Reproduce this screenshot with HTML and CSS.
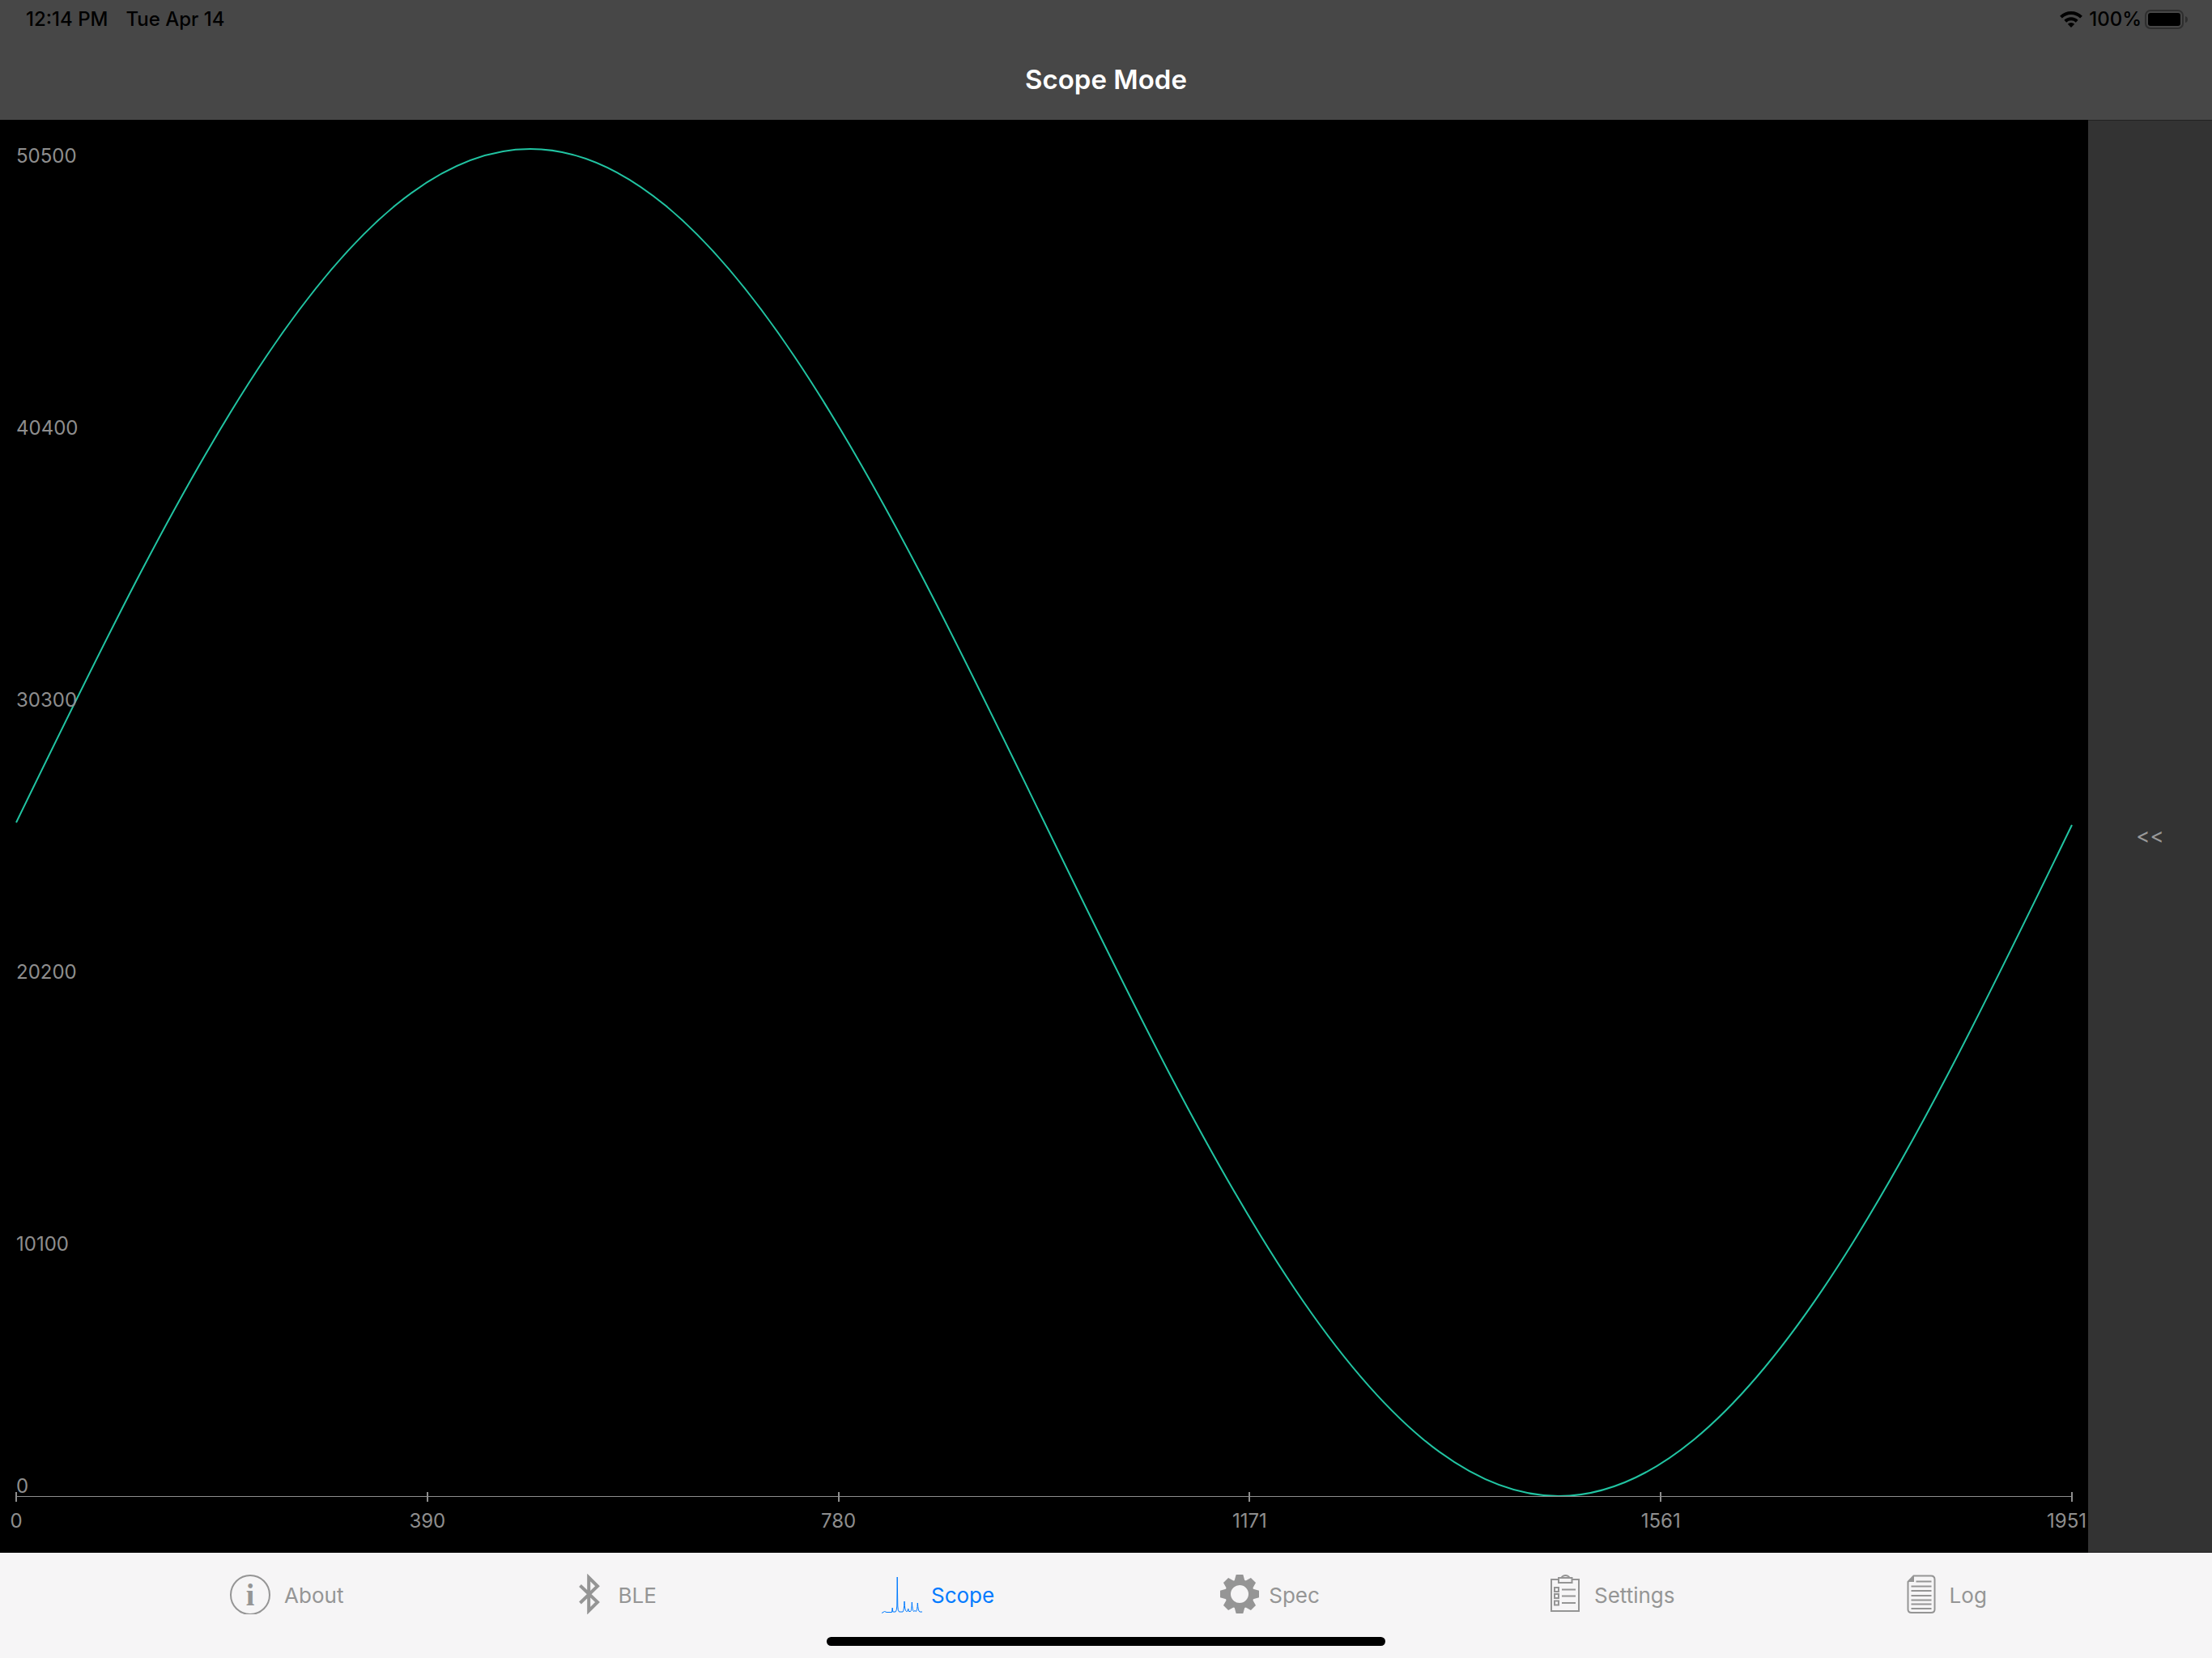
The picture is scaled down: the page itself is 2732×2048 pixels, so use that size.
FILE: index.html
```html
<!DOCTYPE html>
<html lang="en">
<head>
<meta charset="utf-8">
<meta name="viewport" content="width=device-width, initial-scale=1">
<title>Scope Mode</title>
<link rel="stylesheet" href="styles.css">
</head>
<body>
<div class="app">
  <header class="header">
    <div class="status">
      <span>12:14 PM</span>
      <span>Tue Apr 14</span>
      <span class="status-right">
        <svg class="wifi" viewBox="0 0 28 20" aria-hidden="true">
          <path d="M14 20 9.8 15.8a6 6 0 0 1 8.4 0Z"/>
          <path class="wave" d="M6.8 12.2a10.3 10.3 0 0 1 14.4 0M1.5 7.2a17.8 17.8 0 0 1 25 0"/>
        </svg>
        <span>100%</span>
        <svg class="battery" viewBox="0 0 54 24" aria-hidden="true">
          <rect class="shell" x="1" y="1" width="46" height="22" rx="6"/>
          <rect x="4" y="4" width="40" height="16" rx="3"/>
          <path class="nub" d="M50 8q3 1 3 4t-3 4Z"/>
        </svg>
      </span>
    </div>
    <h1 class="title">Scope Mode</h1>
  </header>

  <main class="main">
    <section class="chart" aria-label="Scope trace">
      <div class="plot">
        <svg class="trace" viewBox="0 0 2539 1680" preserveAspectRatio="none" aria-hidden="true">
          <path d="M0 848C207 422 405 16 635 16S1063 422 1270 848S1675 1680 1905 1680S2333 1276 2539 851"/>
        </svg>
        <ol class="y-axis">
          <li>50500</li>
          <li>40400</li>
          <li>30300</li>
          <li>20200</li>
          <li><span>10100</span><span>0</span></li>
        </ol>
      </div>
      <ol class="x-axis">
        <li><span>0</span></li>
        <li><span>390</span></li>
        <li><span>780</span></li>
        <li><span>1171</span></li>
        <li><span>1561</span></li>
        <li><span>1951</span></li>
      </ol>
    </section>
    <button class="drawer" type="button" aria-label="Open side panel">&lt;&lt;</button>
  </main>

  <footer class="footer">
    <nav class="tabs">
      <a class="tab" href="#about">
        <svg class="icon icon-wide" viewBox="0 0 62 50" aria-hidden="true">
          <circle class="line" cx="31" cy="26" r="24"/>
          <text x="31" y="39" text-anchor="middle">i</text>
        </svg>
        <span>About</span>
      </a>
      <a class="tab" href="#ble">
        <svg class="icon" viewBox="0 0 50 50" aria-hidden="true">
          <path class="bluetooth" d="M13.5 14.5 35 35 24.2 45.7V4.5L35 15.3 13.5 36"/>
        </svg>
        <span>BLE</span>
      </a>
      <a class="tab tab-active" href="#scope" aria-current="page">
        <svg class="icon" viewBox="0 0 50 50" aria-hidden="true">
          <path class="spectrum" d="M0 48.5 3.5 46.5 6 47.5H12.5L13.2 42 13.8 47H17Q18.5 46 18.8 40L19.2 4 19.8 40Q20 46 21.5 47H26Q27.5 46 28 34Q28.5 46 30.5 46.5L32 46 32.7 43 33.5 46.5H35.5Q37 46 37.3 35Q38 46 39.5 46.5L41 45.5 42.5 46.5Q43.8 46 44.3 36Q45 46.5 47 47H50"/>
        </svg>
        <span>Scope</span>
      </a>
      <a class="tab" href="#spec">
        <svg class="icon" viewBox="-25 -25 50 50" aria-hidden="true">
          <circle class="gear-ring" r="14.5"/>
          <g id="teeth">
            <path d="M-6.5 -16 -4.3 -24H4.3L6.5 -16ZM-6.5 16 -4.3 24H4.3L6.5 16Z"/>
            <path d="M-16 -6.5 -24 -4.3V4.3L-16 6.5ZM16 -6.5 24 -4.3V4.3L16 6.5Z"/>
          </g>
          <use href="#teeth" transform="rotate(45)"/>
        </svg>
        <span>Spec</span>
      </a>
      <a class="tab" href="#settings">
        <svg class="icon" viewBox="0 0 50 50" aria-hidden="true">
          <path class="line" d="M17 7H8V46H42V7H34M17 5H33.500V11H17ZM20.500 5Q22 2 25.500 2T30.500 5M12 17h5v5h-5ZM12 25h5v5h-5ZM12 33.500h5v5h-5ZM21 19.500H38M21 27.500H38M21 36H38"/>
        </svg>
        <span>Settings</span>
      </a>
      <a class="tab" href="#log">
        <svg class="icon" viewBox="0 0 50 50" aria-hidden="true">
          <path class="line" d="M9.500 10V44Q9.500 48 14 48H38Q42.500 48 42.500 44V7Q42.500 2.500 38 2.500H16.500Z"/>
          <path d="M9 10 17 2V10Z"/>
          <path class="line" d="M19.500 9.500H38.500M13.500 15.500H38.500M13.500 21H38.500M13.500 27H38.500M13.500 32.500H38.500M13.500 37.500H38.500M13.500 43H38.500"/>
        </svg>
        <span>Log</span>
      </a>
    </nav>
    <div class="home-indicator"></div>
  </footer>
</div>
</body>
</html>
```
FILE: styles.css
```css
* {
  box-sizing: border-box;
}

body {
  margin: 0;
  background: #000;
  font-family: Inter, "Liberation Sans", sans-serif;
  font-size: 24px;
  line-height: 28px;
}

ol {
  margin: 0;
  padding: 0;
  list-style: none;
}

.app {
  display: flex;
  flex-direction: column;
  height: 100vh;
}

/* Header */

.header {
  height: 148px;
  background: #474747;
}

.status {
  display: flex;
  gap: 22px;
  padding: 10px 29px 0 32px;
  color: #000;
  font-weight: 500;
}

.status-right {
  display: flex;
  align-items: center;
  margin-left: auto;
}

.wifi {
  width: 28px;
  height: 20px;
  margin-right: 8px;
}

.wifi .wave {
  fill: none;
  stroke: #000;
  stroke-width: 4;
}

.battery {
  width: 54px;
  height: 24px;
  margin-left: 4px;
}

.battery .shell {
  fill: none;
  stroke: #2e2e2e;
  stroke-width: 2;
}

.battery .nub {
  fill: #2e2e2e;
}

.title {
  margin: 40px 0 0;
  color: #fff;
  font-size: 33px;
  font-weight: 600;
  line-height: 40px;
  text-align: center;
}

/* Chart and side drawer */

.main {
  display: flex;
  flex: 1;
  min-height: 0;
}

.chart {
  display: flex;
  flex: 1;
  flex-direction: column;
  padding: 20px 20px 0;
  color: #8e8e8e;
}

.plot {
  display: grid;
  flex: 1;
  grid-template-rows: minmax(0, 1fr);
  min-height: 0;
}

.trace,
.y-axis {
  grid-area: 1 / 1;
}

.trace {
  width: 100%;
  height: 100%;
  overflow: visible;
}

.trace path {
  fill: none;
  stroke: #21c4a2;
  stroke-width: 2;
  vector-effect: non-scaling-stroke;
}

.y-axis {
  display: grid;
  grid-template-rows: repeat(5, 1fr);
  margin: 2px 0 -2px;
}

.y-axis li {
  display: flex;
  flex-direction: column;
  justify-content: space-between;
  padding-top: 9px;
}

.x-axis {
  display: flex;
  justify-content: space-between;
  height: 70px;
  border-top: 1px solid #8e8e8e;
}

.x-axis li {
  display: flex;
  flex-direction: column;
  align-items: center;
  gap: 10px;
  width: 0;
  margin-top: -6px;
}

.x-axis li::before {
  flex: none;
  width: 2px;
  height: 12px;
  background: #8e8e8e;
  content: "";
}

.x-axis li:last-child span {
  align-self: flex-end;
  margin-right: -18px;
}

.drawer {
  width: 153px;
  border: solid #222;
  border-width: 1px 0;
  background: #333;
  color: #999;
  font: inherit;
  font-size: 26px;
}

/* Tab bar */

.footer {
  display: flex;
  flex-direction: column;
  align-items: center;
  justify-content: space-between;
  height: 130px;
  padding: 26px 0 15px;
  background: #f6f5f6;
}

.tabs {
  display: flex;
  justify-content: space-evenly;
  width: 100%;
}

.tab {
  display: flex;
  align-items: center;
  gap: 11px;
  color: #959595;
  font-size: 26px;
  text-decoration: none;
}

.tab span {
  padding-top: 3px;
}

.tab-active {
  color: #007aff;
}

.icon {
  width: 50px;
  height: 50px;
  fill: currentColor;
}

.icon-wide {
  width: 62px;
}

.icon text {
  font-family: "Liberation Serif", serif;
  font-size: 38px;
  font-weight: 700;
}

.line {
  fill: none;
  stroke: currentColor;
  stroke-width: 2;
}

.bluetooth {
  fill: none;
  stroke: currentColor;
  stroke-width: 4;
}

.spectrum {
  fill: none;
  stroke: currentColor;
  stroke-width: 1;
}

.gear-ring {
  fill: none;
  stroke: currentColor;
  stroke-width: 7;
}

.home-indicator {
  width: 690px;
  max-width: 60%;
  height: 11px;
  border-radius: 6px;
  background: #000;
}
```
